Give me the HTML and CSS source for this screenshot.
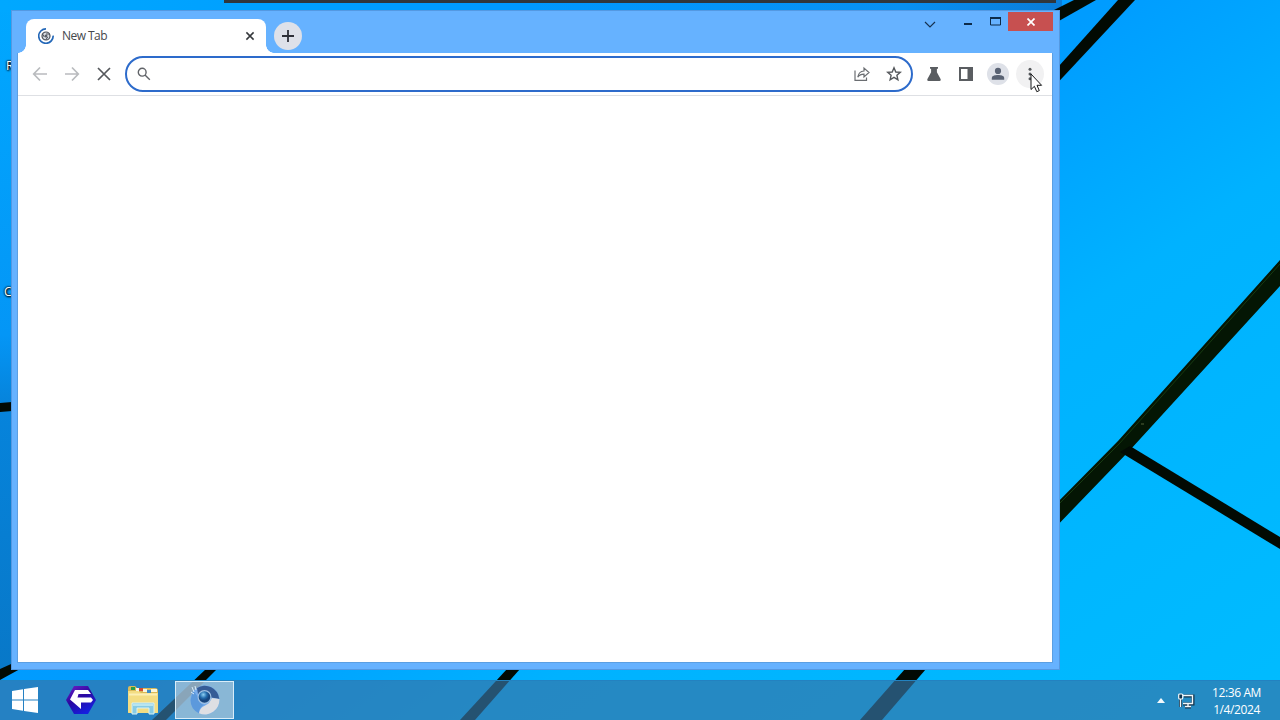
FILE: index.html
```html
<!DOCTYPE html>
<html lang="en">
<head>
    <meta charset="UTF-8">
    <meta name="viewport" content="width=device-width, initial-scale=1.0">
    <title>New Tab</title>
    <link rel="stylesheet" href="styles.css">
</head>
<body>
    <div class="desktop">
        <svg class="wallpaper" width="1280" height="720" viewBox="0 0 1280 720">
            <defs>
                <linearGradient id="left-edge" x1="0" y1="0" x2="0" y2="1">
                    <stop offset="0" stop-color="#00a8ff"/>
                    <stop offset="0.5" stop-color="#0496f6"/>
                    <stop offset="0.6" stop-color="#0684dc"/>
                    <stop offset="1" stop-color="#0878c8"/>
                </linearGradient>
                <linearGradient id="top-edge" x1="0" y1="0" x2="1" y2="0">
                    <stop offset="0" stop-color="#00a8ff"/>
                    <stop offset="0.5" stop-color="#0098ff"/>
                    <stop offset="0.85" stop-color="#0890f2"/>
                    <stop offset="1" stop-color="#0a7cd8"/>
                </linearGradient>
            </defs>
            <rect width="12" height="669" fill="url(#left-edge)"/>
            <rect width="1062" height="12" fill="url(#top-edge)"/>
            <g fill="#020a03">
                <polygon points="1050,12 1074,0 1096,0 1050,26"/>
                <polygon points="1050,76 1118,0 1135,0 1050,91"/>
                <polygon points="1050,510 1118,441 1280,260 1280,286 1130,450 1050,533" fill="#041604"/>
                <polygon points="1120,452 1130,446 1280,537 1280,549"/>
                <polygon points="0,403 12,402 12,411 0,412"/>
                <polygon points="0,669 20,660 20,669 0,680"/>
                <polygon points="206,669 217,669 166,720 152,720"/>
                <polygon points="507,669 520,669 475,720 460,720"/>
                <polygon points="905,669 926,669 882,720 860,720"/>
            </g>
            <path d="M1050 513L1119 444L1280 264" stroke="#173b12" fill="none"/>
            <path d="M1141 424h3" stroke="#52633a"/>
        </svg>
        <div class="back-window"></div>
        <span class="icon-label label-first">R</span>
        <span class="icon-label label-second">C</span>

        <div class="window">
            <div class="titlebar">
                <div class="tab">
                    <svg class="favicon" width="16" height="16" viewBox="0 0 16 16" fill="none">
                        <path d="M8 .9A7.2 7.2 0 1 0 15.1 7.6" stroke="#2468b8" stroke-width="1.7"/>
                        <circle cx="8" cy="8" r="4" fill="#d9dde3" stroke="#4b5058" stroke-width="1.2"/>
                        <path d="M8 6h4M6.3 9L4.4 5.8M9.7 9L7.7 12" stroke="#4b5058"/>
                        <circle cx="8" cy="8" r="1.5" fill="#5b6068"/>
                    </svg>
                    <span class="tab-title">New Tab</span>
                    <svg class="tab-close" width="10" height="10" viewBox="0 0 10 10">
                        <path d="M1.4 1.4L8.6 8.6M8.6 1.4L1.4 8.6" stroke="#35383c" stroke-width="1.5"/>
                    </svg>
                </div>
                <button class="new-tab">
                    <svg width="14" height="14" viewBox="0 0 14 14">
                        <path d="M7 1V13M1 7H13" stroke="#2e3038" stroke-width="1.8"/>
                    </svg>
                </button>
                <div class="window-controls">
                    <button class="control control-search">
                        <svg width="12" height="8" viewBox="0 0 12 8"><path d="M1 1L6 6L11 1" fill="none" stroke="#17324f" stroke-width="1.2"/></svg>
                    </button>
                    <button class="control control-min">
                        <svg width="8" height="2" viewBox="0 0 8 2"><rect width="8" height="2" fill="#0d2b49"/></svg>
                    </button>
                    <button class="control control-max">
                        <svg width="11" height="9" viewBox="0 0 11 9"><path d="M.5 1V8H10.5V1" fill="none" stroke="#0d2b49"/><rect width="11" height="2" fill="#0d2b49"/></svg>
                    </button>
                    <button class="control control-close">
                        <svg width="8" height="8" viewBox="0 0 8 8"><path d="M.5 .5L7.5 7.5M7.5 .5L.5 7.5" stroke="#fff" stroke-width="1.7"/></svg>
                    </button>
                </div>
            </div>

            <div class="content">
                <div class="toolbar">
                    <button class="tool">
                        <svg width="16" height="16" viewBox="0 0 16 16" fill="none" stroke="#b9bbbe" stroke-width="1.7"><path d="M15 8H2M8 1.5L1.7 8L8 14.5"/></svg>
                    </button>
                    <button class="tool">
                        <svg width="16" height="16" viewBox="0 0 16 16" fill="none" stroke="#b9bbbe" stroke-width="1.7"><path d="M1 8H14M8 1.5L14.3 8L8 14.5"/></svg>
                    </button>
                    <button class="tool">
                        <svg width="16" height="16" viewBox="0 0 16 16" fill="none" stroke="#55585c" stroke-width="1.7"><path d="M2 2L14 14M14 2L2 14"/></svg>
                    </button>
                    <div class="omnibox">
                        <span class="tool">
                            <svg width="16" height="16" viewBox="0 0 16 16" fill="none" stroke="#606368" stroke-width="1.4"><circle cx="6.2" cy="6.2" r="3.9"/><path d="M9 9L13.8 13.8"/></svg>
                        </span>
                        <input class="address" type="text" aria-label="Address">
                        <button class="tool">
                            <svg width="16" height="16" viewBox="0 0 16 16" fill="none" stroke="#6b6e72" stroke-width="1.2"><path d="M1 4.5V14.4H12.5V11.5M3.8 11.2C4.3 7.5 6.3 5.3 10 5V2L15 6.5L10 11V8.1C7 8.1 5.2 9 3.8 11.2Z"/></svg>
                        </button>
                        <button class="tool">
                            <svg width="16" height="16" viewBox="0 0 16 16" fill="none" stroke="#55585c" stroke-width="1.4"><path d="M8 1.8L9.8 6L14.3 6.4L10.9 9.3L11.9 13.8L8 11.4L4.1 13.8L5.1 9.3L1.7 6.4L6.2 6Z"/></svg>
                        </button>
                    </div>
                    <button class="tool">
                        <svg width="16" height="16" viewBox="0 0 16 16" fill="#5a5d61"><path d="M4 1H12V2.8H10.9V6.3L14.7 13.2Q15.2 15 13.6 15H2.4Q.8 15 1.3 13.2L5.1 6.3V2.8H4Z"/></svg>
                    </button>
                    <button class="tool">
                        <svg width="16" height="16" viewBox="0 0 16 16" fill="#5a5d61"><path fill-rule="evenodd" d="M1 1H15V15H1ZM3 3V13H9.5V3Z"/></svg>
                    </button>
                    <button class="tool">
                        <span class="avatar">
                            <svg width="14" height="14" viewBox="0 0 14 14" fill="#596273"><circle cx="7" cy="3.9" r="3.1"/><path d="M.8 12.8V11C.8 8.8 4 8 7 8S13.2 8.8 13.2 11V12.8Z"/></svg>
                        </span>
                    </button>
                    <button class="tool menu-button">
                        <svg width="4" height="14" viewBox="0 0 4 14" fill="#55585c"><circle cx="2" cy="2.2" r="1.5"/><circle cx="2" cy="7" r="1.5"/><circle cx="2" cy="11.8" r="1.5"/></svg>
                    </button>
                </div>
                <div class="page"></div>
            </div>
        </div>

        <div class="taskbar">
            <button class="task task-start">
                <svg width="26" height="26" viewBox="0 0 26 26" fill="#fff"><path d="M0 4L11 2.3V12.4H0ZM12 2.1L26 0V12.4H12ZM0 13.4H11V23.7L0 22ZM12 13.4H26V26L12 23.9Z"/></svg>
            </button>
            <button class="task task-app">
                <svg width="32" height="30" viewBox="0 0 32 30">
                    <defs><linearGradient id="hex" x1="0" y1="0" x2="0.6" y2="1"><stop offset="0" stop-color="#7420c8"/><stop offset="0.5" stop-color="#2a08a0"/><stop offset="1" stop-color="#1520e0"/></linearGradient></defs>
                    <path d="M9 1H23L31 15L23 29H9L1 15Z" fill="url(#hex)"/>
                    <path d="M10 5H23L26 9H13.5L12.5 12.5H26L28 15L26 17.5H16V24L5 14.5Z" fill="#fff"/>
                </svg>
            </button>
            <button class="task task-files">
                <svg width="32" height="30" viewBox="0 0 32 30">
                    <path d="M1 3Q1 1 3 1H8L10 3H28Q31 3 31 6V28H1Z" fill="#d9b958"/>
                    <path d="M4 2H8V5H4Z" fill="#279c4b"/><path d="M12 3H16V6H12Z" fill="#d64b30"/><path d="M20 5H24V8H20Z" fill="#3d8bc4"/>
                    <path d="M9 3H12V7H9ZM16 4H20V7H16ZM24 4H30V7H24Z" fill="#f8f6df"/>
                    <path d="M1 6H11L14 8H31V27Q31 28 30 28H2Q1 28 1 27Z" fill="#f3dd83"/>
                    <path d="M2 9.5H30" stroke="#fbefb5" stroke-width="2"/>
                    <path d="M5 18H27V29H22V23H10V29H5Z" fill="#87cbe4" stroke="#d5f1f7"/>
                    <path d="M6 20H26" stroke="#b8e5f0" stroke-width="2"/>
                </svg>
            </button>
            <button class="task task-browser active">
                <svg width="32" height="32" viewBox="0 0 32 32">
                    <defs><radialGradient id="ball" cx=".4" cy=".3"><stop offset="0" stop-color="#8ed1f5"/><stop offset=".6" stop-color="#236cad"/><stop offset="1" stop-color="#17457e"/></radialGradient></defs>
                    <circle cx="16" cy="16" r="14.5" fill="#77aceb"/>
                    <path d="M8 4A14.5 14.5 0 0 1 30.3 15L20 13L9 10Z" fill="#365c96"/>
                    <path d="M30.4 15A14.5 14.5 0 0 1 10 29.2C11 22 17 22 20 19L23 14Z" fill="#dedfe3"/>
                    <path d="M1.6 16L4 6L9 13C9 18 12 20 15 21C11 23 10 26 10 29.2A14.5 14.5 0 0 1 1.6 16Z" fill="#5c99dc"/>
                    <circle cx="15.5" cy="13" r="7" fill="#9fc0e2"/>
                    <circle cx="15.5" cy="13" r="5.8" fill="url(#ball)"/>
                    <path d="M3 3L5 8M6 2L7 6M2 8L5 10" stroke="#d9ecfa"/>
                </svg>
            </button>
            <div class="tray">
                <svg class="tray-arrow" width="8" height="5" viewBox="0 0 8 5"><path d="M4 0L8 5H0Z" fill="#f3f9fc"/></svg>
                <svg class="tray-network" width="18" height="16" viewBox="0 0 18 16" fill="none">
                    <path d="M7 3H16V11H6M11 11V14M8 14H14M3.5 6V14" stroke="#12344d" stroke-width="3"/>
                    <path d="M6 2.5H15.5V10.5H6M11 11V13.5M8 13.5H14M3.5 6V14" stroke="#f2f8fb" stroke-width="1.4"/>
                    <rect x="1.7" y="1" width="4" height="5" rx="1" fill="#12344d" stroke="#f2f8fb" stroke-width="1.2"/>
                </svg>
                <div class="clock">
                    <span class="time">12:36 AM</span>
                    <span class="date">1/4/2024</span>
                </div>
            </div>
        </div>

        <svg class="cursor" width="13" height="20" viewBox="0 0 13 20">
            <path d="M1 1V16.5L4.4 13.3L6.8 18.7L9.3 17.6L7 12.3H11.6Z" fill="#fff" stroke="#17181a"/>
        </svg>
    </div>
</body>
</html>
```
FILE: styles.css
```css
* {
    box-sizing: border-box;
}

body {
    margin: 0;
    overflow: hidden;
    font-family: "Open Sans", "Noto Sans", sans-serif;
}

button {
    padding: 0;
    border: none;
    background: none;
}

svg {
    display: block;
    flex-shrink: 0;
}

.desktop {
    position: relative;
    display: flex;
    flex-direction: column;
    width: 1280px;
    height: 720px;
    overflow: hidden;
    background: linear-gradient(145deg, #0098ff 0%, #009cff 48%, #00b2ff 66%, #00bcff 100%);
}

.wallpaper {
    position: absolute;
    top: 0;
    left: 0;
}

.back-window {
    position: absolute;
    top: 0;
    left: 224px;
    width: 832px;
    height: 3px;
    background: #30363c;
}

.icon-label {
    position: absolute;
    color: #fff;
    font-size: 12px;
    line-height: 16px;
    text-shadow: 1px 1px 2px #000, 0 0 2px #000, 0 0 2px #000;
}

.label-first {
    top: 58px;
    left: 6px;
}

.label-second {
    top: 284px;
    left: 4px;
}

/* browser window */
.window {
    position: relative;
    display: flex;
    flex-direction: column;
    width: 1049px;
    height: 660px;
    margin: 10px 0 0 11px;
    padding: 0 8px 8px 7px;
    background: #66b2ff;
    box-shadow: inset 0 0 0 1px #5499e2;
}

.titlebar {
    display: flex;
    height: 43px;
    padding-left: 8px;
}

.tab {
    position: relative;
    display: flex;
    align-items: center;
    width: 240px;
    height: 34px;
    margin-top: 9px;
    padding: 0 11px 0 12px;
    border-radius: 8px 8px 0 0;
    background: #fff;
}

.tab::before,
.tab::after {
    content: "";
    position: absolute;
    bottom: 0;
    width: 8px;
    height: 8px;
}

.tab::before {
    left: -8px;
    background: radial-gradient(circle at 0 0, transparent 7.5px, #fff 8px);
}

.tab::after {
    right: -8px;
    background: radial-gradient(circle at 100% 0, transparent 7.5px, #fff 8px);
}

.tab-title {
    flex: 1;
    margin-left: 8px;
    color: #45484c;
    font-size: 12px;
    line-height: 16px;
    letter-spacing: -0.55px;
}

.new-tab {
    display: flex;
    align-items: center;
    justify-content: center;
    width: 28px;
    height: 28px;
    margin: 12px 0 0 8px;
    border-radius: 50%;
    background: #dee1e9;
}

.window-controls {
    display: flex;
    margin: 2px -1px 0 auto;
}

.control {
    display: flex;
    justify-content: center;
    height: 19px;
}

.control-search {
    width: 48px;
    padding-top: 9px;
}

.control-min {
    width: 28px;
    padding-top: 11px;
}

.control-max {
    width: 26px;
    padding-top: 5px;
}

.control-close {
    align-items: center;
    width: 45px;
    background: #c75050;
}

.content {
    display: flex;
    flex: 1;
    flex-direction: column;
    background: #fff;
    box-shadow: 0 1px 0 1px #5b9fe2;
    clip-path: inset(0 -1px -1px -1px);
}

.toolbar {
    display: flex;
    align-items: center;
    height: 43px;
    padding: 0 6px;
    border-bottom: 1px solid #dee0e4;
}

.tool {
    display: flex;
    align-items: center;
    justify-content: center;
    width: 32px;
    height: 28px;
}

.omnibox {
    display: flex;
    flex: 1;
    align-items: center;
    height: 36px;
    margin: 0 5px;
    padding: 0 1px;
    border: 2px solid #2d6bcb;
    border-radius: 18px;
}

.address {
    flex: 1;
    border: none;
    outline: none;
    background: none;
    font: 14px "Open Sans", sans-serif;
}

.avatar {
    display: flex;
    align-items: center;
    justify-content: center;
    width: 22px;
    height: 22px;
    border-radius: 50%;
    background: #dee1e8;
}

.menu-button {
    width: 28px;
    margin: 0 2px;
    border-radius: 50%;
    background: #f1f1f2;
}

.page {
    flex: 1;
}

/* taskbar */
.taskbar {
    position: relative;
    display: flex;
    height: 40px;
    margin-top: auto;
    padding-right: 19px;
    border-top: 1px solid #2382c0;
    background: rgba(54, 116, 167, 0.68);
}

.task {
    display: flex;
    align-items: center;
    justify-content: center;
    height: 38px;
}

.task-start {
    width: 50px;
}

.task-app {
    width: 62px;
}

.task-files {
    width: 62px;
}

.task-browser {
    width: 59px;
    margin-left: 1px;
}

.active {
    border: 1px solid #d9edf9;
    background: rgba(190, 211, 224, 0.65);
}

.tray {
    display: flex;
    align-items: center;
    margin-left: auto;
    color: #fff;
}

.tray-arrow {
    margin-right: 12px;
}

.tray-network {
    margin-right: 17px;
}

.clock {
    display: flex;
    flex-direction: column;
    align-items: center;
    font-size: 12px;
    line-height: 17px;
    letter-spacing: -0.4px;
}

.cursor {
    position: absolute;
    top: 73px;
    left: 1030px;
}
```
